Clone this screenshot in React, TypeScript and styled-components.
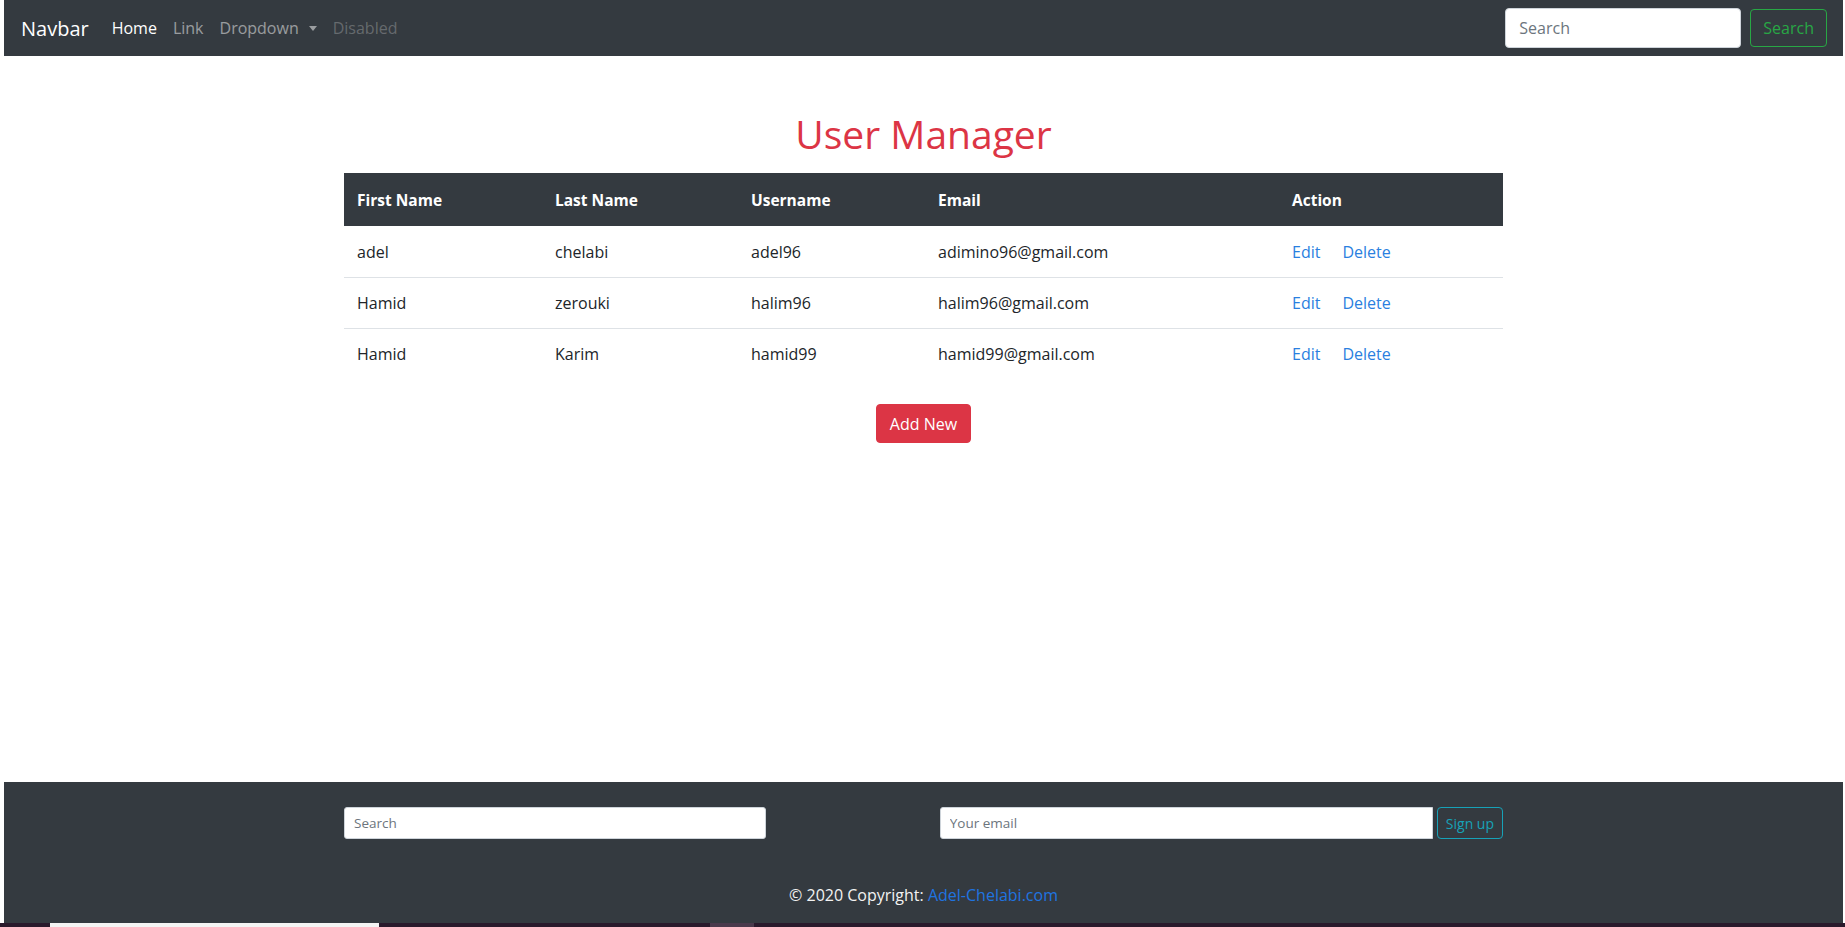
import React from "react";
import styled, { createGlobalStyle } from "styled-components";

const GlobalStyle = createGlobalStyle`
  html, body { margin: 0; padding: 0; background: #ffffff; }
  body { font-family: "Open Sans", "Noto Sans", Arial, sans-serif; color: #212529; }
  * { box-sizing: border-box; }
`;

const Page = styled.div`
  height: 927px;
  padding: 0 2px 0 4px;
  display: flex;
  flex-direction: column;
  overflow: hidden;
`;

const NavBar = styled.nav`
  height: 56px;
  flex: 0 0 56px;
  background: #343a40;
  display: flex;
  align-items: center;
  padding: 0 16px 0 17px;
`;

const Brand = styled.a`
  color: #ffffff;
  font-size: 20px;
  margin-right: 23px;
  text-decoration: none;
`;

const NavLinks = styled.div`
  display: flex;
  align-items: center;
  gap: 16px;
  flex: 1;
`;

const NavLink = styled.a<{ $tone: "active" | "muted" | "disabled" }>`
  font-size: 16px;
  text-decoration: none;
  display: flex;
  align-items: center;
  color: ${(p) =>
    p.$tone === "active" ? "#ffffff" : p.$tone === "muted" ? "rgba(255,255,255,0.5)" : "rgba(255,255,255,0.25)"};
`;

const Caret = styled.span`
  display: inline-block;
  margin-left: 10px;
  border-top: 5px solid rgba(255,255,255,0.5);
  border-left: 4.5px solid transparent;
  border-right: 4.5px solid transparent;
`;

const NavForm = styled.form`
  display: flex;
  align-items: center;
  gap: 9px;
`;

const NavInput = styled.input`
  width: 236px;
  height: 40px;
  border-radius: 4px;
  border: 1px solid #ced4da;
  padding: 0 13px;
  font-family: inherit;
  font-size: 16px;
  color: #495057;
  &::placeholder { color: #6c757d; }
`;

const OutlineButton = styled.button<{ $color: string; $h: number; $fs: number; $px: number }>`
  background: transparent;
  border: 1px solid ${(p) => p.$color};
  color: ${(p) => p.$color};
  border-radius: 4px;
  height: ${(p) => p.$h}px;
  padding: 0 ${(p) => p.$px}px;
  font-family: inherit;
  font-size: ${(p) => p.$fs}px;
`;

const Main = styled.main`
  flex: 1;
  display: flex;
  flex-direction: column;
  align-items: center;
`;

const Container = styled.div`
  width: 1159px;
  display: flex;
  flex-direction: column;
  align-items: center;
`;

const Title = styled.h1`
  margin: 53px 0 14px;
  color: #dc3545;
  font-weight: 400;
  font-size: 39px;
  line-height: 50px;
`;

const Table = styled.table`
  width: 100%;
  border-collapse: collapse;
  font-size: 16px;
`;

const Th = styled.th<{ $w: number }>`
  width: ${(p) => p.$w}px;
  background: #343a40;
  color: #ffffff;
  font-weight: 700;
  text-align: left;
  height: 53px;
  padding: 0 13px;
  font-size: 15.5px;
`;

const Tr = styled.tr`
  & + & td { border-top: 1px solid #dee2e6; }
`;

const Td = styled.td`
  height: 51px;
  padding: 1px 13px 0;
  color: #212529;
`;

const ActionLink = styled.a`
  color: #2a7fe0;
  text-decoration: none;
  margin-right: 22px;
`;

const AddButton = styled.button`
  margin-top: 25px;
  background: #dc3545;
  color: #ffffff;
  border: 1px solid #dc3545;
  border-radius: 4px;
  height: 39px;
  padding: 0 13px;
  font-family: inherit;
  font-size: 16px;
`;

const Footer = styled.footer`
  height: 141px;
  flex: 0 0 141px;
  background: #343a40;
  display: flex;
  flex-direction: column;
  align-items: center;
  padding-top: 25px;
`;

const FooterRow = styled.div`
  width: 1159px;
  display: flex;
  align-items: center;
  justify-content: space-between;
`;

const FooterInput = styled.input<{ $w: number; $square?: boolean }>`
  width: ${(p) => p.$w}px;
  height: 32px;
  border: 1px solid #ced4da;
  border-radius: ${(p) => (p.$square ? "3px 0 0 3px" : "3px")};
  padding: 0 9px;
  font-family: inherit;
  font-size: 13.5px;
  &::placeholder { color: #6c757d; }
`;

const InputGroup = styled.div`
  display: flex;
  align-items: center;
  gap: 4px;
`;

const Copyright = styled.div`
  margin-top: 44px;
  color: #f2f2f2;
  font-size: 16px;
  line-height: 24px;
`;

const CopyLink = styled.a`
  color: #1f74e0;
  text-decoration: none;
`;

const Strip = styled.div`
  height: 4px;
  flex: 0 0 4px;
  margin: 0 -2px 0 -4px;
  background: #2a1a2c;
  display: flex;
`;

const StripSeg = styled.div<{ $w: number; $c: string }>`
  width: ${(p) => p.$w}px;
  background: ${(p) => p.$c};
`;

const users = [
  { first: "adel", last: "chelabi", username: "adel96", email: "adimino96@gmail.com" },
  { first: "Hamid", last: "zerouki", username: "halim96", email: "halim96@gmail.com" },
  { first: "Hamid", last: "Karim", username: "hamid99", email: "hamid99@gmail.com" },
];

export default function App() {
  return (
    <>
      <GlobalStyle />
      <Page>
        <NavBar>
          <Brand href="#">Navbar</Brand>
          <NavLinks>
            <NavLink $tone="active" href="#">Home</NavLink>
            <NavLink $tone="muted" href="#">Link</NavLink>
            <NavLink $tone="muted" href="#">
              Dropdown
              <Caret />
            </NavLink>
            <NavLink $tone="disabled" href="#">Disabled</NavLink>
          </NavLinks>
          <NavForm onSubmit={(e) => e.preventDefault()}>
            <NavInput placeholder="Search" />
            <OutlineButton $color="#28a745" $h={38} $fs={16} $px={12}>Search</OutlineButton>
          </NavForm>
        </NavBar>
        <Main>
          <Container>
            <Title>User Manager</Title>
            <Table>
              <thead>
                <tr>
                  <Th $w={198}>First Name</Th>
                  <Th $w={196}>Last Name</Th>
                  <Th $w={187}>Username</Th>
                  <Th $w={354}>Email</Th>
                  <Th $w={224}>Action</Th>
                </tr>
              </thead>
              <tbody>
                {users.map((u, i) => (
                  <Tr key={i}>
                    <Td>{u.first}</Td>
                    <Td>{u.last}</Td>
                    <Td>{u.username}</Td>
                    <Td>{u.email}</Td>
                    <Td>
                      <ActionLink href="#">Edit</ActionLink>
                      <ActionLink href="#">Delete</ActionLink>
                    </Td>
                  </Tr>
                ))}
              </tbody>
            </Table>
            <AddButton>Add New</AddButton>
          </Container>
        </Main>
        <Footer>
          <FooterRow>
            <FooterInput $w={422} placeholder="Search" />
            <InputGroup>
              <FooterInput $w={493} $square placeholder="Your email" />
              <OutlineButton $color="#17a2b8" $h={32} $fs={14} $px={8}>Sign up</OutlineButton>
            </InputGroup>
          </FooterRow>
          <Copyright>
            © 2020 Copyright: <CopyLink href="#">Adel-Chelabi.com</CopyLink>
          </Copyright>
        </Footer>
        <Strip>
          <StripSeg $w={50} $c="#2a1a2c" />
          <StripSeg $w={329} $c="#f4f4f4" />
          <StripSeg $w={331} $c="#2a1a2c" />
          <StripSeg $w={44} $c="#4a3a4c" />
        </Strip>
      </Page>
    </>
  );
}
